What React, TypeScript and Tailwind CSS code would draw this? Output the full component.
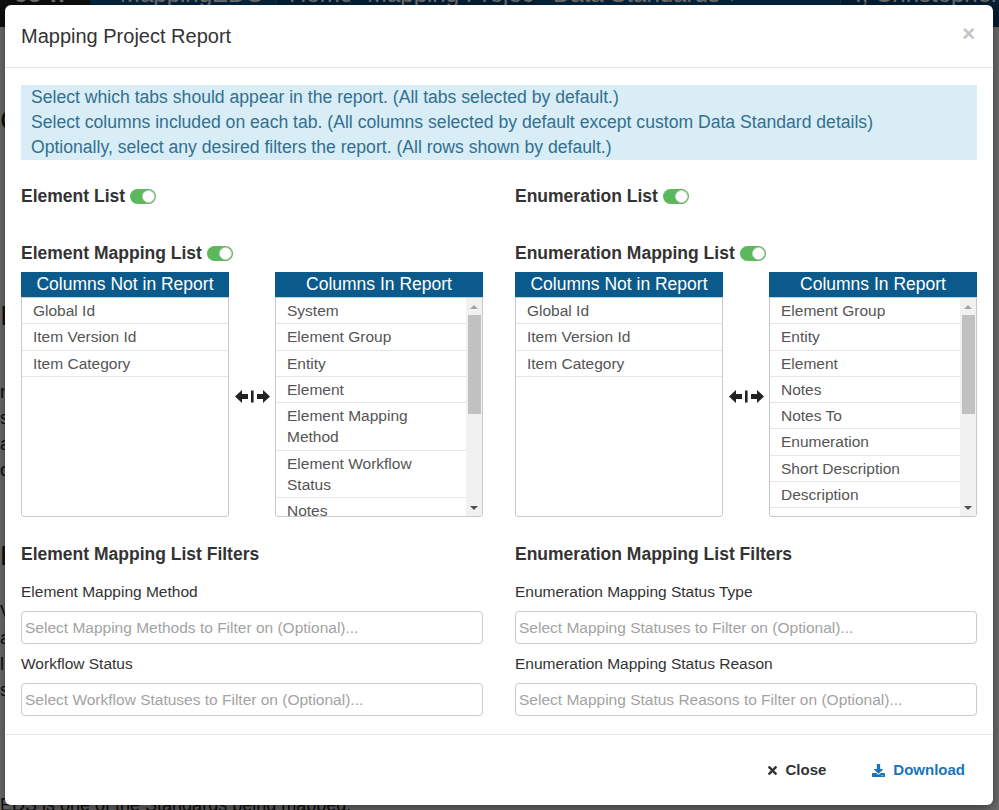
import React from "react";
import { FaTimes, FaDownload } from "react-icons/fa";

function Toggle() {
  return (
    <span className="inline-flex h-[15px] w-[26px] items-center justify-end rounded-full bg-[#5cb85c] p-[1px]">
      <span className="h-[13px] w-[13px] rounded-full border border-[#d0d0d0] bg-white" />
    </span>
  );
}

function SwapIcon() {
  return (
    <svg width="35" height="13" viewBox="0 0 35 13" className="text-[#222]">
      <polygon points="0,6.5 7,0 7,13" fill="currentColor" />
      <rect x="6" y="4" width="7" height="5" fill="currentColor" />
      <rect x="16" y="0.5" width="2.6" height="12" fill="currentColor" />
      <rect x="22" y="4" width="7" height="5" fill="currentColor" />
      <polygon points="35,6.5 28,0 28,13" fill="currentColor" />
    </svg>
  );
}

function Row({ children }: { children: React.ReactNode }) {
  return (
    <div className="border-b border-[#e6e6e6] px-[11px] py-[2px] text-[15.5px] leading-[21.3px] text-[#555]">
      {children}
    </div>
  );
}

function Scrollbar() {
  return (
    <div className="flex w-[16px] shrink-0 flex-col items-center bg-[#f1f1f1]">
      <div className="flex h-[17px] w-full items-center justify-center">
        <span className="h-0 w-0 border-x-[4px] border-b-[4px] border-x-transparent border-b-[#a3a3a3]" />
      </div>
      <div className="h-[99px] w-[13px] bg-[#c1c1c1]" />
      <div className="flex-1" />
      <div className="flex h-[17px] w-full items-center justify-center">
        <span className="h-0 w-0 border-x-[4px] border-t-[4px] border-x-transparent border-t-[#505050]" />
      </div>
    </div>
  );
}

function DualList({ notIn, inReport }: { notIn: string[]; inReport: string[][] }) {
  return (
    <div className="grid grid-cols-[208px_1fr_208px]">
      <div className="flex flex-col">
        <div className="h-[25px] bg-[#0b5a8c] text-center text-[17.5px] leading-[25px] text-white">
          Columns Not in Report
        </div>
        <div className="h-[220px] overflow-hidden rounded-b-[3px] border border-[#c8c8c8]">
          {notIn.map((t) => (
            <Row key={t}>{t}</Row>
          ))}
        </div>
      </div>
      <div className="flex items-center justify-center pt-[3px]">
        <SwapIcon />
      </div>
      <div className="flex flex-col">
        <div className="h-[25px] bg-[#0b5a8c] text-center text-[17.5px] leading-[25px] text-white">
          Columns In Report
        </div>
        <div className="flex h-[220px] overflow-hidden rounded-b-[3px] border border-[#c8c8c8]">
          <div className="flex-1 overflow-hidden">
            {inReport.map((t) => (
              <Row key={t.join(" ")}>
                {t.map((l) => (
                  <div key={l}>{l}</div>
                ))}
              </Row>
            ))}
          </div>
          <Scrollbar />
        </div>
      </div>
    </div>
  );
}

function Column(props: {
  t1: string;
  t2: string;
  notIn: string[];
  inReport: string[][];
  filterTitle: string;
  f1: [string, string];
  f2: [string, string];
}) {
  return (
    <div className="flex flex-col">
      <div className="flex h-[25px] items-center gap-[5px] text-[17.5px] font-bold text-[#333]">
        <span>{props.t1}</span>
        <Toggle />
      </div>
      <div className="mt-[32px] flex h-[25px] items-center gap-[5px] text-[17.5px] font-bold text-[#333]">
        <span>{props.t2}</span>
        <Toggle />
      </div>
      <div className="mt-[6px]">
        <DualList notIn={props.notIn} inReport={props.inReport} />
      </div>
      <div className="mt-[25px] h-[25px] text-[17.5px] font-bold leading-[25px] text-[#333]">{props.filterTitle}</div>
      <div className="mt-[14px] text-[15.5px] leading-[21px] text-[#333]">{props.f1[0]}</div>
      <div className="mt-[9px] flex h-[33px] items-center rounded-[4px] border border-[#ccc] px-[3px] text-[15.5px] text-[#a3a3a3]">
        {props.f1[1]}
      </div>
      <div className="mt-[9px] text-[15.5px] leading-[21px] text-[#333]">{props.f2[0]}</div>
      <div className="mt-[9px] flex h-[33px] items-center rounded-[4px] border border-[#ccc] px-[3px] text-[15.5px] text-[#a3a3a3]">
        {props.f2[1]}
      </div>
    </div>
  );
}

export default function App() {
  return (
    <div className="relative h-[810px] w-[999px] overflow-hidden bg-white font-['Liberation_Sans',Arial,sans-serif]">
      {/* background page */}
      <div className="flex h-full flex-col">
        <div className="flex h-[27px] shrink-0 bg-[#0b4576] text-[24px] leading-none whitespace-nowrap text-white">
          <div className="w-[90px] shrink-0 overflow-hidden bg-[#222]">
            <div className="-mt-[18px] pl-[14px] font-bold">eo-n</div>
          </div>
          <div className="w-[186px] shrink-0 overflow-hidden bg-[#0d5289]">
            <div className="-mt-[18px] pl-[30px]">MappingEDO</div>
          </div>
          <div className="w-[74px] shrink-0 overflow-hidden border-l border-[#2a6aa0]">
            <div className="-mt-[18px] pl-[12px]">Home</div>
          </div>
          <div className="w-[185px] shrink-0 overflow-hidden border-l border-[#2a6aa0]">
            <div className="-mt-[18px] pl-[16px]">Mapping Projects ▾</div>
          </div>
          <div className="w-[305px] shrink-0 overflow-hidden bg-[#0d5289]">
            <div className="-mt-[18px] pl-[18px]">Data Standards ▾</div>
          </div>
          <div className="flex-1 overflow-hidden border-l border-[#2a6aa0]">
            <div className="-mt-[18px] pl-[14px]">I, Christopher III ▾</div>
          </div>
        </div>
        <div className="flex flex-1 flex-col pl-0 text-[18px] leading-[26px] text-[#222]">
          <div className="mt-[80px] text-[30px]">C</div>
          <div className="mt-[170px] text-[28px]">I</div>
          <div className="mt-[50px]">ne</div>
          <div>s</div>
          <div>a</div>
          <div>ou</div>
          <div className="mt-[60px] text-[28px]">E</div>
          <div className="mt-[30px]">V</div>
          <div>a</div>
          <div>l</div>
          <div>s</div>
          <div className="mt-auto -mb-[8px]">EDS is one of the Standards being mapped.</div>
        </div>
      </div>
      {/* backdrop */}
      <div className="absolute inset-0 bg-[rgba(0,0,0,0.56)]" />
      {/* modal */}
      <div className="absolute left-[5px] top-[5px] flex h-[800px] w-[988px] flex-col rounded-[6px] bg-white shadow-[0_5px_15px_rgba(0,0,0,0.5)]">
        <div className="flex h-[63px] shrink-0 items-center justify-between border-b border-[#e5e5e5] pl-[16px] pr-[18px]">
          <div className="text-[20px] text-[#333]">Mapping Project Report</div>
          <div className="-mt-[4px] text-[22px] font-bold leading-none text-[#c4c4c4]">×</div>
        </div>
        <div className="flex-1 px-[16px] pt-[17px]">
          <div className="bg-[#d9edf7] px-[10px] text-[17.6px] leading-[25px] text-[#31708f]">
            <div>Select which tabs should appear in the report. (All tabs selected by default.)</div>
            <div>
              Select columns included on each tab. (All columns selected by default except custom Data Standard details)
            </div>
            <div>Optionally, select any desired filters the report. (All rows shown by default.)</div>
          </div>
          <div className="mt-[24px] grid grid-cols-2 gap-[32px]">
            <Column
              t1="Element List"
              t2="Element Mapping List"
              notIn={["Global Id", "Item Version Id", "Item Category"]}
              inReport={[
                ["System"],
                ["Element Group"],
                ["Entity"],
                ["Element"],
                ["Element Mapping", "Method"],
                ["Element Workflow", "Status"],
                ["Notes"],
                ["Notes To"],
              ]}
              filterTitle="Element Mapping List Filters"
              f1={["Element Mapping Method", "Select Mapping Methods to Filter on (Optional)..."]}
              f2={["Workflow Status", "Select Workflow Statuses to Filter on (Optional)..."]}
            />
            <Column
              t1="Enumeration List"
              t2="Enumeration Mapping List"
              notIn={["Global Id", "Item Version Id", "Item Category"]}
              inReport={[
                ["Element Group"],
                ["Entity"],
                ["Element"],
                ["Notes"],
                ["Notes To"],
                ["Enumeration"],
                ["Short Description"],
                ["Description"],
              ]}
              filterTitle="Enumeration Mapping List Filters"
              f1={["Enumeration Mapping Status Type", "Select Mapping Statuses to Filter on (Optional)..."]}
              f2={["Enumeration Mapping Status Reason", "Select Mapping Status Reasons to Filter on (Optional)..."]}
            />
          </div>
        </div>
        <div className="flex h-[71px] shrink-0 items-center justify-end gap-[22px] border-t border-[#e5e5e5] pr-[16px] text-[15px] font-bold">
          <button className="flex items-center gap-[6px] px-[12px] text-[#333]">
            <FaTimes className="h-[13px] w-[13px]" />
            <span>Close</span>
          </button>
          <button className="flex items-center gap-[8px] px-[12px] text-[#1a74bb]">
            <FaDownload className="h-[13px] w-[13px]" />
            <span>Download</span>
          </button>
        </div>
      </div>
    </div>
  );
}
